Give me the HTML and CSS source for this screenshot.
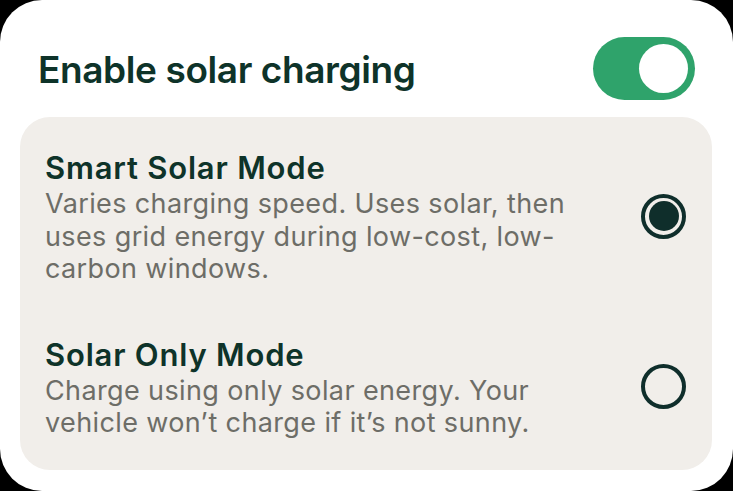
FILE: index.html
```html
<!DOCTYPE html>
<html>
<head>
<meta charset="utf-8">
<link rel="stylesheet" href="styles.css">
</head>
<body>
<div class="card">
  <div class="header">
    <h1 class="title">Enable solar charging</h1>
    <div class="toggle"><div class="knob"></div></div>
  </div>
  <div class="panel">
    <div class="option">
      <div class="text">
        <div class="opt-title">Smart Solar Mode</div>
        <div class="opt-desc">Varies charging speed. Uses solar, then<br>uses grid energy during low-cost, low-<br>carbon windows.</div>
      </div>
      <div class="radio checked"><div class="dot"></div></div>
    </div>
    <div class="option">
      <div class="text">
        <div class="opt-title">Solar Only Mode</div>
        <div class="opt-desc">Charge using only solar energy. Your<br>vehicle won’t charge if it’s not sunny.</div>
      </div>
      <div class="radio"></div>
    </div>
  </div>
</div>
</body>
</html>
```
FILE: styles.css
```css
html, body {
  margin: 0;
  padding: 0;
  background: #000;
}
body {
  width: 733px;
  height: 491px;
  overflow: hidden;
  font-family: Inter, "Noto Sans", sans-serif;
}
.card {
  width: 733px;
  height: 491px;
  background: #fff;
  border-radius: 42px;
  box-sizing: border-box;
  padding: 37px 21px 0 20px;
}
.header {
  display: flex;
  align-items: center;
  justify-content: space-between;
  padding: 0 17px 0 18px;
  height: 63px;
}
.title {
  margin: 0;
  font-size: 37px;
  font-weight: 600;
  color: #0e3329;
  letter-spacing: -0.4px;
  line-height: 46px;
  padding-top: 2px;
}
.toggle {
  width: 102px;
  height: 63px;
  border-radius: 32px;
  background: #2fa36b;
  display: flex;
  align-items: center;
  justify-content: flex-end;
  padding-right: 7px;
  box-sizing: border-box;
}
.knob {
  width: 49px;
  height: 49px;
  border-radius: 50%;
  background: #fff;
}
.panel {
  margin-top: 17px;
  height: 353px;
  background: #f1eeea;
  border-radius: 30px;
  box-sizing: border-box;
  padding: 34px 26px 0 25px;
  display: flex;
  flex-direction: column;
  gap: 52px;
}
.option {
  display: flex;
  align-items: center;
  justify-content: space-between;
}
.text {
  flex: 1;
  white-space: nowrap;
}
.opt-title {
  font-size: 31px;
  font-weight: 600;
  color: #0e3329;
  line-height: 34px;
  letter-spacing: 0.8px;
}
.opt-desc {
  margin-top: 3px;
  font-size: 27px;
  line-height: 32.5px;
  letter-spacing: 0.38px;
  color: #6d6d67;
}
.radio {
  width: 45px;
  height: 45px;
  margin-bottom: 4px;
  border-radius: 50%;
  border: 4px solid #0f2e2b;
  box-sizing: border-box;
  display: flex;
  align-items: center;
  justify-content: center;
  flex-shrink: 0;
}
.dot {
  width: 30px;
  height: 30px;
  border-radius: 50%;
  background: #0f2e2b;
}
```
